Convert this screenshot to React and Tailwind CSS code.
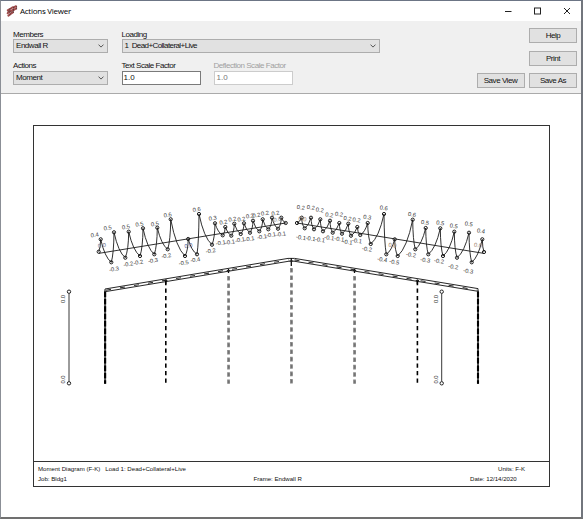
const leftPoints = [
  [98.7, 251.7], [100.7, 239.3], [111.3, 262.3], [114, 232.3], [125.3, 257.7], [128.7, 231.7], [140, 256],
  [143, 228.3], [154.3, 254.3], [157.3, 227.7], [167.7, 249.3], [170.7, 219.3], [185, 256], [188.2, 239],
  [197, 254.3], [199, 214], [212, 244.7], [215, 223.3], [222.7, 235.3], [225.3, 227], [231.3, 235.7],
  [234.3, 223.7], [240.7, 234], [244, 223.3], [250, 232.7], [253, 220.7], [259.3, 231.3], [262.7, 219.3],
  [268.3, 229.3], [272, 217.7], [278, 228.7], [281.3, 217.7], [285.7, 223],
];

const rightPoints = [
  [297, 223], [301.7, 217.7], [304.7, 228.3], [311, 217.7], [314, 229.3], [320.3, 219.3], [323, 231.3],
  [330, 220.7], [332.7, 232.7], [339.3, 223], [342, 233.7], [348.3, 223.7], [351, 235.7], [357.3, 227],
  [360.3, 235], [367.7, 223], [370.7, 244], [384, 214], [386.3, 254.3], [394.7, 239.3], [397.7, 256],
  [412.7, 219.7], [415.3, 249.3], [425.7, 228], [428.3, 254.3], [440.3, 228.3], [443, 256], [454.3, 231.7],
  [457, 257.7], [469, 232.7], [471.7, 262.3], [482.3, 239.3], [484, 252],
];

const leftLabels = [
  ['0.4', 94.7, 234.7], ['0.5', 107.7, 227.7], ['0.5', 126, 226.7], ['0.5', 139.3, 224], ['0.5', 155, 223.7],
  ['0.6', 167.7, 214.7], ['0.6', 196.7, 209.3], ['0.3', 212.7, 218], ['0.2', 223.3, 222], ['0.2', 232.3, 219],
  ['0.2', 241.3, 219], ['0.2', 250, 215.7], ['0.2', 256.5, 215], ['0.2', 265, 213], ['0.2', 275.3, 213],
  ['-0.3', 114, 269], ['-0.2', 128.3, 264], ['-0.2', 138.3, 262.3], ['-0.3', 153, 260.5], ['-0.2', 166.3, 255.7],
  ['-0.5', 183.7, 262.7], ['-0.4', 195.3, 259.7], ['-0.2', 210.7, 250.7], ['-0.1', 220.7, 242.7],
  ['-0.1', 230, 242], ['-0.1', 240, 239.8], ['-0.1', 249.5, 238.8], ['-0.1', 262, 236.6], ['-0.1', 271, 234.6],
  ['-0.1', 281, 234],
];

const rightLabels = [
  ['0.2', 300.7, 207.3], ['0.2', 310.7, 207.3], ['0.2', 319.7, 209.7], ['0.2', 329.3, 214.7], ['0.2', 339, 214],
  ['0.2', 347.6, 218.3], ['0.2', 356.5, 219.7], ['0.3', 367.3, 217], ['0.6', 383.7, 207.7], ['0.6', 412, 214.3],
  ['0.5', 425, 222.3], ['0.5', 440.3, 222.7], ['0.5', 453.7, 225.7], ['0.5', 468.7, 223.7], ['0.4', 481, 230.7],
  ['-0.1', 301, 237.3], ['-0.1', 310.7, 238.3], ['-0.1', 320, 239.7], ['-0.1', 329.3, 237.7], ['-0.1', 339.3, 239],
  ['-0.1', 347.6, 242], ['-0.1', 357, 240.7], ['-0.2', 367, 249], ['-0.4', 382.3, 259.3], ['-0.5', 394.3, 261.8],
  ['-0.2', 411, 254.7], ['-0.3', 425.3, 260], ['-0.2', 439, 261], ['-0.2', 453.3, 266.7], ['-0.3', 468.3, 271],
];

// Each wave drops steeply on the support side and bows gently towards the next trough.
function wavePath(points, steepRising) {
  let d = `M${points[0][0]} ${points[0][1]}`;
  for (let i = 1; i < points.length; i++) {
    const [x0, y0] = points[i - 1];
    const [x1, y1] = points[i];
    const rising = y1 < y0;
    const h = y1 - y0;
    const w = x1 - x0;
    if (rising === steepRising) {
      d += rising
        ? ` Q${x1 - 0.2} ${y0 + h * 0.3} ${x1} ${y1}`
        : ` Q${x0 + 0.2} ${y0 + h * 0.7} ${x1} ${y1}`;
    } else {
      d += rising
        ? ` Q${x0 + w * 0.62} ${y0 + h * 0.22} ${x1} ${y1}`
        : ` Q${x0 + w * 0.38} ${y0 + h * 0.78} ${x1} ${y1}`;
    }
  }
  return d;
}

function Label({ text, x, y, angle, fill = '#333' }) {
  return (
    <text x={x} y={y + 2.1} transform={`rotate(${angle} ${x} ${y})`} textAnchor="middle" fontSize="5.8" fill={fill}>
      {text}
    </text>
  );
}

function Waves({ points, labels, steepRising, angle }) {
  return (
    <g>
      <path d={wavePath(points, steepRising)} fill="none" stroke="#1a1a1a" strokeWidth="0.9" />
      {points.map(([x, y], i) => (
        <circle key={i} cx={x} cy={y} r="1.6" fill="none" stroke="#1a1a1a" strokeWidth="1" />
      ))}
      {labels.map(([text, x, y], i) => (
        <Label key={i} text={text} x={x} y={y} angle={angle} />
      ))}
    </g>
  );
}

function Axis({ x }) {
  return (
    <g>
      <path d={`M${x} 293.5V381.5`} stroke="#222" strokeWidth="0.9" />
      <circle cx={x} cy="291.7" r="1.7" fill="#fff" stroke="#222" strokeWidth="1" />
      <circle cx={x} cy="383.3" r="1.7" fill="#fff" stroke="#222" strokeWidth="1" />
      <Label text="0.0" x={x - 5.6} y={299} angle={-90} />
      <Label text="0.0" x={x - 5.6} y={379.5} angle={-90} />
    </g>
  );
}

function Diagram() {
  return (
    <svg viewBox="34 126 515 335" className="block h-[335px] w-[515px] tracking-normal" fontFamily="'Liberation Sans', Arial, sans-serif">
      <path d="M98.7 253.4L285.7 223M297 223L484 253.4" stroke="#1a1a1a" strokeWidth="0.9" />
      <Waves points={leftPoints} labels={leftLabels} steepRising={true} angle={-9} />
      <Waves points={rightPoints} labels={rightLabels} steepRising={false} angle={9} />
      <Label text="0.0" x={102} y={245.3} angle={-9} fill="#666a80" />
      <Label text="0.0" x={188.5} y={245.5} angle={-9} fill="#4a5a9a" />
      <Label text="0.0" x={277.5} y={219.2} angle={-9} fill="#777" />
      <Label text="0.0" x={302.5} y={218.8} angle={9} fill="#9a8068" />
      <Label text="0.0" x={392.5} y={245} angle={9} fill="#9a7858" />
      <Label text="0.0" x={478} y={245} angle={9} fill="#9a8068" />

      <path
        d="M105 289L288 258.4H294.5L478 288.6V291.3L294 261.2H289L105 291.7Z"
        fill="#fff" stroke="#1a1a1a" strokeWidth="0.95"
      />
      <path d="M106 290.2L288.5 259.9M294.5 259.9L477 290" stroke="#333" strokeWidth="1.1" strokeDasharray="5 9.2" />
      <path d="M291.3 258V266M228.5 269V273M354.5 269V273M165.7 279.5V284M417.4 279.5V284" stroke="#111" strokeWidth="1.3" />
      <path d="M226.8 270.5H230.2M289.5 261H293.2M352.8 270.5H356.2M164 280.5H167.4M415.7 280.5H419" stroke="#222" />
      <path d="M105.1 290.5V383.8M478 290.5V383.8" stroke="#555" strokeWidth="2" />
      <path d="M105.1 291.5V383.8M478 291.5V383.8" stroke="#000" strokeWidth="2.1" strokeDasharray="5.4 2" />
      <path d="M165.8 281V383.8M417.4 281V383.8" stroke="#000" strokeWidth="1.6" strokeDasharray="4.2 3.3" />
      <path d="M228.5 276V383.8M354.5 276V383.8" stroke="#888" strokeWidth="2.7" strokeDasharray="4.6 2.8" />
      <path d="M291.4 268V383.8" stroke="#888" strokeWidth="2.7" strokeDasharray="4.6 2.8" />
      <path d="M228.9 277V383.8M354.9 277V383.8M291.8 269V383.8" stroke="#666" strokeWidth="1" strokeDasharray="2.7 4.7" />
      <Axis x={69} />
      <Axis x={441.7} />
    </svg>
  );
}

function Combo({ value, className }) {
  return (
    <div className={`flex h-[14px] items-center justify-between border border-[#adadad] bg-[#e1e1e1] pr-[3px] pl-[2px] ${className}`}>
      <span>{value}</span>
      <svg viewBox="0 0 6 4" className="h-1 w-1.5">
        <path d="M0.5 0.6L3 3.1L5.5 0.6" fill="none" stroke="#444" strokeWidth="0.9" />
      </svg>
    </div>
  );
}

function Field({ label, className = '', children }) {
  return (
    <div className={className}>
      <div className="h-[10px] leading-[11px]">{label}</div>
      {children}
    </div>
  );
}

function Button({ children }) {
  return (
    <button className="h-[15px] w-[48px] border border-[#adadad] bg-[#e1e1e1] text-center leading-[13px]">{children}</button>
  );
}

function Logo() {
  return (
    <svg viewBox="0 0 12 12" className="h-3 w-3">
      <g stroke="#a04c4c" strokeWidth="2" fill="none" strokeLinecap="round">
        <path d="M1.8 5.4L3.4 4.2M4.8 3.5L6.6 2.3M8.2 2.1L10 1.2" />
        <path d="M1.6 8.2L3.4 6.9M4.8 6.2L6.8 4.9M8.2 4.6L10 3.4" />
        <path d="M2.4 10.6L3.8 9.5M5 8.8L6.8 7.5" />
      </g>
      <path d="M4 3V10.4M7.5 1.6V8M10.6 1V4.6M1.4 7L4 5.4M4.8 7.7L7.5 6" stroke="#4c2020" strokeWidth="0.6" />
    </svg>
  );
}

export default function App() {
  return (
    <div className="flex h-[519px] w-[583px] flex-col border-t border-r-2 border-b-2 border-l border-t-[#6c7585] border-r-[#72767d] border-b-[#707070] border-l-[#8b8f96] bg-white font-['Liberation_Sans',Arial,sans-serif] text-[8px] tracking-[-0.46px] text-[#111]">
      <header className="flex h-[20px] shrink-0 items-center pl-[5px]">
        <Logo />
        <h1 className="ml-[2px] font-['Open_Sans','Noto_Sans',sans-serif] text-[8px] leading-[10px] tracking-[-0.26px] text-black">Actions Viewer</h1>
        <svg viewBox="0 0 66 8" className="mr-[10px] ml-auto h-2 w-[66px]" fill="none" stroke="#222" strokeWidth="1">
          <path d="M0 4.5H6.5" />
          <rect x="29.5" y="1" width="6" height="6" />
          <path d="M59 1L65 7M65 1L59 7" />
        </svg>
      </header>

      <section className="flex h-[73px] shrink-0 border-b border-[#aaa] bg-[#f0f0f0] pt-2 pr-[4px] pl-3">
        <div className="w-[95px]">
          <Field label="Members"><Combo value="Endwall R" className="w-[95px]" /></Field>
          <Field label="Actions" className="mt-[7px]"><Combo value="Moment" className="mt-[1px] w-[95px]" /></Field>
        </div>
        <div className="ml-[13.5px] w-[258.5px]">
          <Field label="Loading">
            <Combo value={'1\u00a0 Dead+Collateral+Live'} className="w-[258.5px] tracking-[-0.58px]" />
          </Field>
          <div className="mt-[7px] flex gap-[13px]">
            <Field label="Text Scale Factor" className="w-[79px]">
              <div className="mt-[1px] h-[14px] w-[79px] border border-[#7a7a7a] bg-white pl-[1px] leading-[12px] tracking-normal">1.0</div>
            </Field>
            <Field label="Deflection Scale Factor" className="text-[#a0a0a0]">
              <div className="mt-[1px] h-[14px] w-[79px] border border-[#ccc] bg-white pl-[2px] leading-[12px] tracking-normal text-[#777]">1.0</div>
            </Field>
          </div>
        </div>
        <div className="-mt-[1px] ml-auto flex flex-col items-end gap-[7.7px]">
          <Button>Help</Button>
          <Button>Print</Button>
          <div className="flex gap-[4.5px]">
            <Button>Save View</Button>
            <Button>Save As</Button>
          </div>
        </div>
      </section>

      <main className="pt-[31px] pl-[32px]">
        <div className="h-[362px] w-[517px] border border-[#333]">
          <Diagram />
          <footer className="grid h-[25px] grid-cols-[215.5px_216.5px_1fr] grid-rows-[10px_10px] border-t border-[#333] pt-[2px] pl-[4px] text-[6.1px] leading-[10px] tracking-normal">
            <div className="flex gap-[5px] whitespace-nowrap">
              <span>Moment Diagram (F-K)</span>
              <span>Load 1: Dead+Collateral+Live</span>
            </div>
            <div />
            <div className="pl-[28px]">Units: F-K</div>
            <div>Job: Bldg1</div>
            <div>Frame: Endwall R</div>
            <div>Date: 12/14/2020</div>
          </footer>
        </div>
      </main>
    </div>
  );
}
